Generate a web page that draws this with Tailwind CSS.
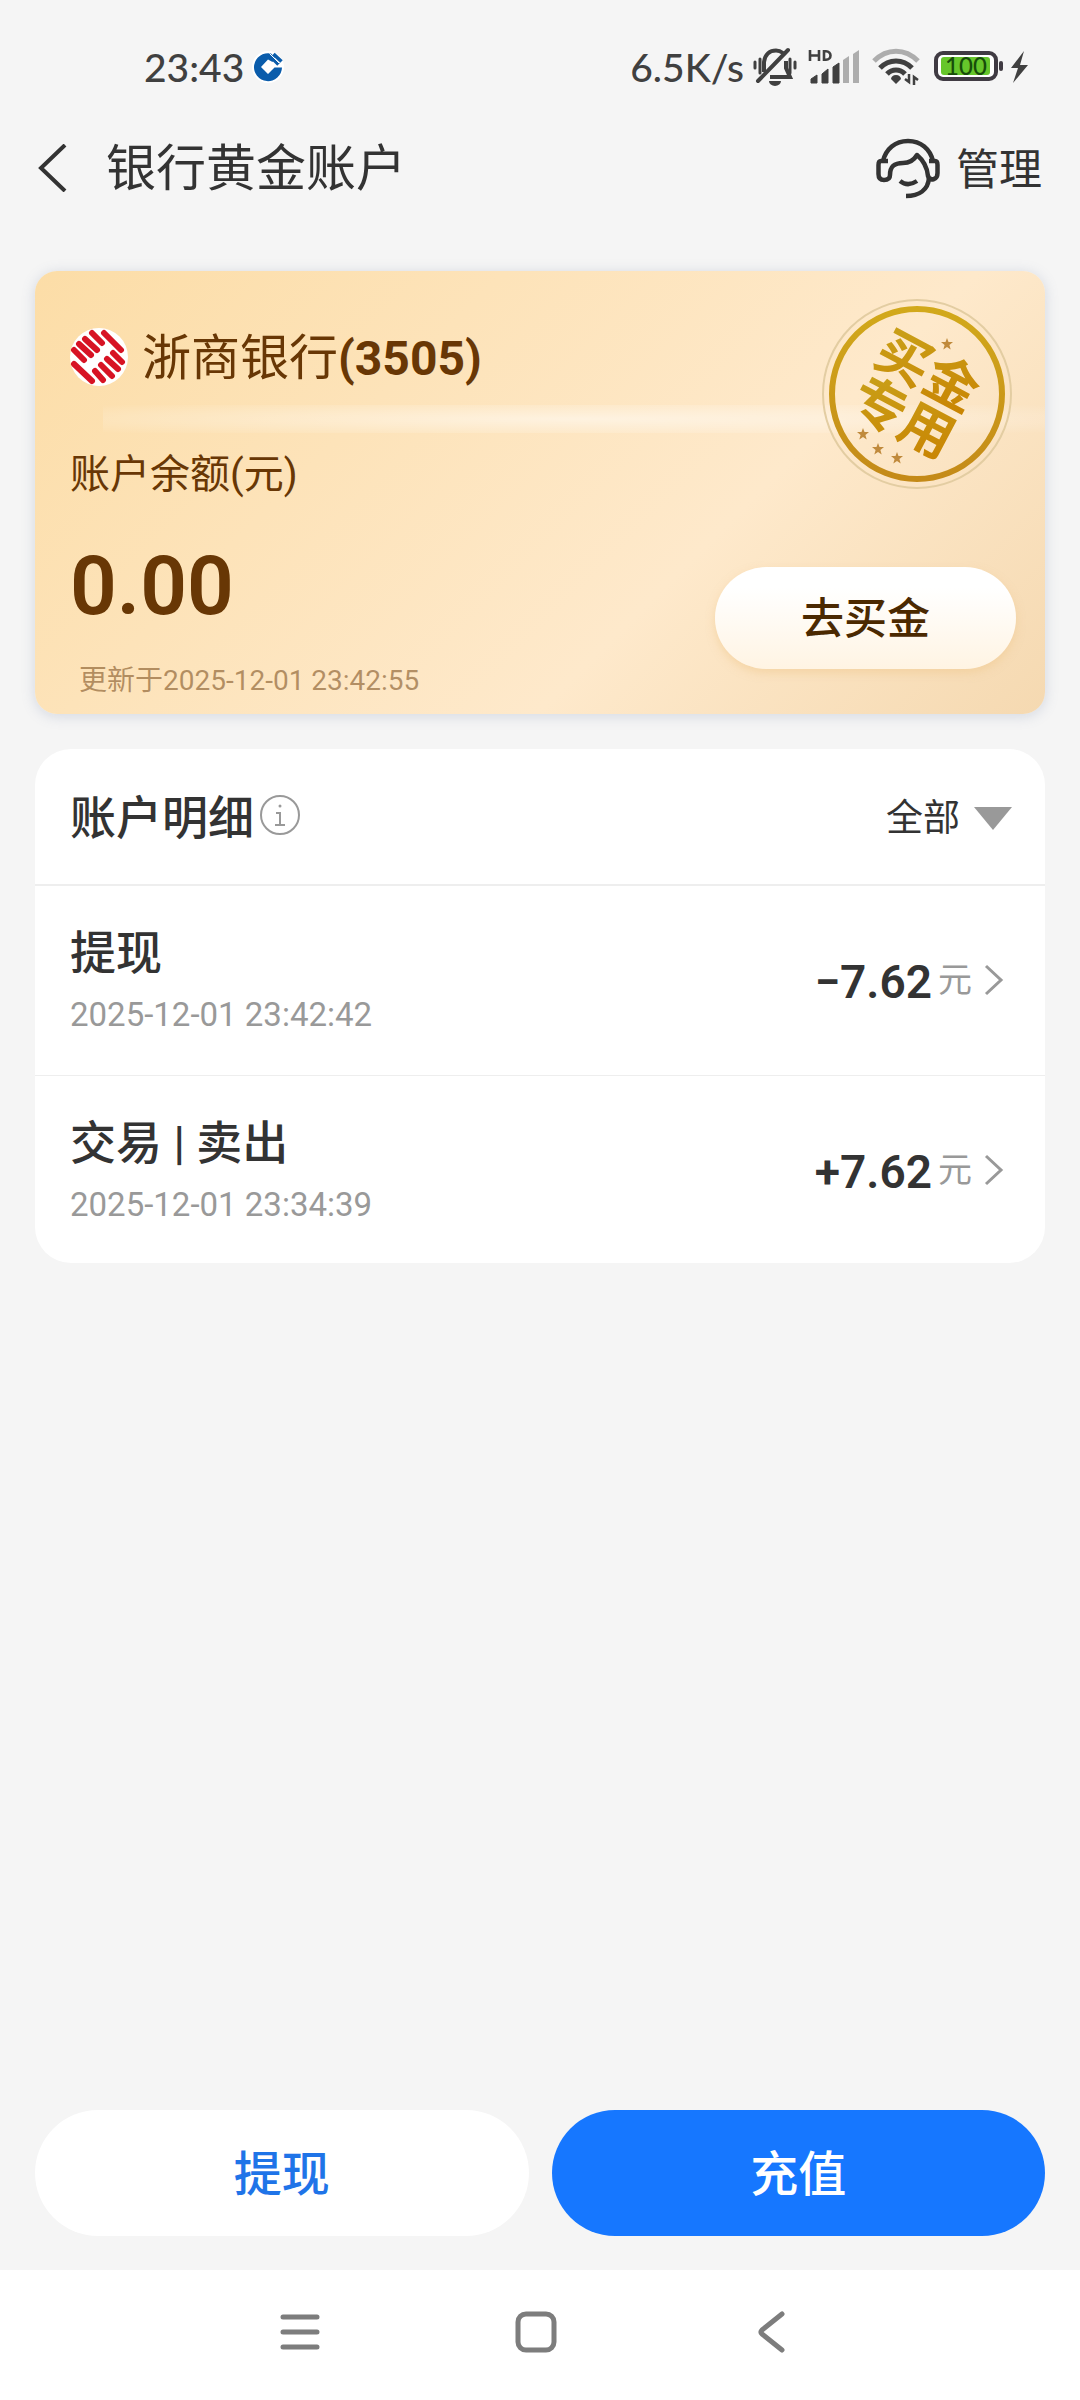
<!DOCTYPE html>
<html lang="zh-CN">
<head>
<meta charset="utf-8">
<meta name="viewport" content="width=device-width, initial-scale=1">
<title>银行黄金账户</title>
<script src="https://cdn.jsdelivr.net/npm/@tailwindcss/browser@4"></script>
</head>
<body class="flex min-h-screen flex-col bg-[#f5f5f5] font-['Roboto','Noto_Sans_CJK_SC',sans-serif] text-[#333]">

<!-- Status bar -->
<div class="flex h-[134px] items-center justify-between pr-[50px] pl-[144px] font-['Lato',sans-serif] text-[39px] leading-[48px] font-medium text-[#404040]">
  <div class="flex items-center gap-2">
    <span>23:43</span>
    <svg class="size-8" viewBox="0 0 32 32" aria-hidden="true">
      <circle cx="16" cy="16" r="16" fill="#fff"/>
      <path d="M30 16.500A14 14 0 1 1 19 2.500L23 7L20.500 11L16 8.500L9 16L16 23L22.500 16.500Z" fill="#0a5cab"/>
      <path d="M17 4L26.500 13.500M21.500 3L29.500 10.500" stroke="#0a5cab" stroke-width="3.500"/>
      <path d="M17.500 2.500L27 12" stroke="#fff" stroke-width="1"/>
    </svg>
  </div>
  <div class="flex items-center">
    <span>6.5K/s</span>
    <svg class="ml-2 h-10 w-[46px]" viewBox="0 0 46 40" fill="none" stroke="#404040" stroke-width="4" aria-hidden="true">
      <path d="M3 15v6M8 12v14M38 12v14M43 15v6" stroke-width="3" stroke-linecap="round"/>
      <path d="M12 25V15C13 7 18 3.500 24 3.500C27 3.500 29 4.500 31 6M34 14V21L38 30H18"/>
      <path d="M6 34L36 3" stroke-linecap="round"/>
      <path d="M17 34h12a6 5 0 0 1-12 0Z" fill="#404040" stroke="none"/>
    </svg>
    <svg class="ml-[10px] h-10 w-[52px]" viewBox="0 0 52 40" fill="#404040" aria-hidden="true">
      <path d="M2 3v11M11 3v11M2 8.500h9M16 4.300v8.400h2c6 0 6-8.400 0-8.400Z" fill="none" stroke="#404040" stroke-width="2.600"/>
      <path d="M3 32l6-4v8H3ZM14 27l6-5v14h-6ZM25 20l6-4v20h-6Z" stroke="#404040" stroke-width="1" stroke-linejoin="round"/>
      <path d="M35 13l6-4v27h-6ZM45 7l6-4v33h-6Z" fill="#adadad"/>
    </svg>
    <svg class="ml-3 h-10 w-12" viewBox="0 0 48 40" fill="none" stroke="#404040" stroke-width="5" aria-hidden="true">
      <path d="M2 14C15 1 33 1 46 14" stroke="#adadad"/>
      <path d="M8 21C17 11.500 31 11.500 40 21M15 27C20 21.500 28 21.500 33 27"/>
      <path d="M24 28c3 0 5 2 5 4l-5 5l-5-5c0-2 2-4 5-4Z" fill="#404040" stroke="none"/>
      <path d="M37 27v8l-4-3M42 38v-8l4 3" stroke-width="2.500"/>
    </svg>
    <svg class="ml-[14px] h-10 w-24" viewBox="0 0 96 40" aria-hidden="true">
      <rect x="2" y="6" width="60" height="26" rx="7" fill="#fff" stroke="#403b43" stroke-width="4"/>
      <rect x="7" y="10" width="49" height="18" rx="3" fill="#66c62b"/>
      <text x="32" y="28" text-anchor="middle" font-family="Lato, sans-serif" font-size="24" font-weight="500" fill="#174d0a">100</text>
      <rect x="65" y="14" width="4" height="10" rx="2" fill="#403b43"/>
      <path d="M90 4L77 21h7l-5 15L94 18h-8Z" fill="#404040"/>
    </svg>
  </div>
</div>

<!-- Title bar -->
<header class="flex h-[68px] items-center pr-[38px] pl-9">
  <button class="h-[68px] w-9" aria-label="返回">
    <svg class="h-12 w-8" viewBox="0 0 32 48" fill="none" stroke="#333" stroke-width="4" aria-hidden="true"><path d="M29 1L5 24L29 47"/></svg>
  </button>
  <h1 class="ml-[34px] pt-[2px] text-[50px] leading-[60px]">银行黄金账户</h1>
  <a href="#manage" class="ml-auto flex items-center gap-4 text-[43px] leading-[60px]">
    <svg class="h-[62px] w-16" viewBox="0 0 64 62" fill="none" stroke="#333" stroke-width="4.500" stroke-linejoin="round" aria-hidden="true">
      <path d="M7 24C10 12 19 4 32 4S54 12 57 24"/>
      <path d="M12 24H5Q2.500 24 2.500 28V37Q2.500 43 8 43Q14 43 14 38C14 29 19 26 27 26C34 26 38 23 41 18C47 23 51 29 52 39C53 42 55 43 58 42Q61.500 41 61.500 36V28Q61.500 24 59 24H53"/>
      <path d="M24 44C29 48 35 48 41 44M53 41C52 53 43 59 30 59"/>
    </svg>
    <span class="pt-1">管理</span>
  </a>
</header>

<main class="flex-1 px-[35px] pt-[69px]">
  <!-- Gold account -->
  <section class="relative rounded-[22px] bg-linear-[135deg] from-[#fcdda7] via-[#fee9cb] via-65% to-[#f5d9b1] pt-[57px] pl-[35px] text-[#683705] shadow-[0_2px_14px_rgba(90,110,150,0.22)]">
    <div class="absolute top-[134px] right-0 left-[68px] h-[28px] bg-radial-[ellipse_at_center] from-white/50 to-transparent" aria-hidden="true"></div>
    <svg class="absolute top-[28px] right-[33px] size-[190px]" viewBox="0 0 190 190" role="img" aria-label="买金专用">
      <defs>
        <linearGradient id="gold" x1="0" y1="0" x2="0" y2="1"><stop offset="0" stop-color="#d2a91b"/><stop offset="1" stop-color="#c48a18"/></linearGradient>
        <linearGradient id="ink" x1="0" y1="0" x2="1" y2="1"><stop offset="0" stop-color="#c9a51c"/><stop offset="1" stop-color="#c98100"/></linearGradient>
        <path id="star" d="M0-6L1.500-2H6L2.400 1L3.700 5.500L0 3L-3.700 5.500L-2.400 1L-6-2H-1.500Z"/>
      </defs>
      <circle cx="95" cy="95" r="94" fill="none" stroke="#e3cda2" stroke-width="2"/>
      <circle cx="95" cy="95" r="85" fill="none" stroke="url(#gold)" stroke-width="6"/>
      <g transform="rotate(28 95 97)" fill="url(#ink)" font-family="Noto Sans CJK SC, sans-serif" font-size="54" font-weight="700" text-anchor="middle">
        <text x="93" y="89">买金</text>
        <text x="93" y="142">专用</text>
      </g>
      <g fill="#c08a3c">
        <use href="#star" x="125" y="45"/><use href="#star" x="41" y="135"/><use href="#star" x="56" y="150"/><use href="#star" x="75" y="159"/>
      </g>
    </svg>
    <div class="flex h-[58px] items-center gap-[14px]">
      <svg class="size-[58px]" viewBox="0 0 58 58" aria-hidden="true">
        <circle cx="29" cy="29" r="29" fill="#fff"/>
        <path d="M34 5L51 22M22 5L32 15M15 11L27 22M9 16L21 27M4 22L14 32M4 36L22 53M25 43L33 52M31 37L42 48M37 31L48 41M43 25L52 34" fill="none" stroke="#d71324" stroke-width="6" stroke-linecap="round"/>
      </svg>
      <h2 class="pt-1 text-[49px] leading-[58px]">浙商银行<span class="text-[48px] font-bold">(3505)</span></h2>
    </div>
    <div class="flex items-end justify-between">
      <div>
        <p class="mt-[65px] text-[40px] leading-[48px]">账户余额(元)</p>
        <p class="mt-[39px] text-[82px] leading-[96px] font-semibold">0.00</p>
        <p class="mt-[27px] pb-[13px] pl-[9px] text-[28px] leading-[40px] text-[#683705]/50">更新于2025-12-01 23:42:55</p>
      </div>
      <button class="mr-[29px] mb-[45px] h-[102px] w-[301px] rounded-full bg-linear-to-b from-white from-20% to-[#fff4e3] pt-[2px] text-[43px] font-medium text-[#4b2901] shadow-[0_4px_8px_rgba(240,200,140,0.5)]">去买金</button>
    </div>
  </section>

  <!-- Account entries -->
  <section class="mt-[35px] rounded-[36px] bg-white">
    <div class="flex h-[137px] items-center border-b-2 border-[#eee] pr-[33px] pl-[35px]">
      <h2 class="pt-[2px] text-[46px] leading-[56px] font-medium">账户明细</h2>
      <button class="mb-1 ml-[6px]" aria-label="明细说明">
        <svg class="size-10" viewBox="0 0 40 40" fill="none" stroke="#999" stroke-width="2" aria-hidden="true">
          <circle cx="20" cy="20" r="19"/><path d="M16 18h4v12M15 30h10"/><circle cx="20" cy="11" r="1.500" fill="#999" stroke="none"/>
        </svg>
      </button>
      <label class="ml-auto flex items-center gap-[14px] pt-1">
        <select class="appearance-none bg-transparent text-[37px] leading-[48px]" aria-label="明细类型"><option>全部</option></select>
        <svg class="h-[23px] w-[38px]" viewBox="0 0 38 23" aria-hidden="true"><path d="M0 0H38L19 23Z" fill="#999"/></svg>
      </label>
    </div>
    <ul>
      <li class="border-b border-[#eee]">
        <a href="#withdraw-entry" class="flex items-center justify-between pt-[39px] pr-[41px] pb-[40px] pl-[35px]">
          <div>
            <h3 class="text-[46px] leading-[56px] font-medium">提现</h3>
            <p class="mt-[14px] text-[33px] leading-[40px] text-[#999]">2025-12-01 23:42:42</p>
          </div>
          <div class="flex items-center">
            <span class="pt-1 text-[46px] leading-[56px] font-semibold">−7.62</span>
            <span class="ml-[6px] text-[34px] leading-[40px] text-[#999]">元</span>
            <svg class="ml-3 h-8 w-5" viewBox="0 0 20 32" fill="none" stroke="#999" stroke-width="3" aria-hidden="true"><path d="M2 2L17 16L2 30"/></svg>
          </div>
        </a>
      </li>
      <li>
        <a href="#sell-entry" class="flex items-center justify-between pt-[39px] pr-[41px] pb-[38px] pl-[35px]">
          <div>
            <h3 class="text-[46px] leading-[56px] font-medium">交易 | 卖出</h3>
            <p class="mt-[14px] text-[33px] leading-[40px] text-[#999]">2025-12-01 23:34:39</p>
          </div>
          <div class="flex items-center">
            <span class="pt-1 text-[46px] leading-[56px] font-semibold">+7.62</span>
            <span class="ml-[6px] text-[34px] leading-[40px] text-[#999]">元</span>
            <svg class="ml-3 h-8 w-5" viewBox="0 0 20 32" fill="none" stroke="#999" stroke-width="3" aria-hidden="true"><path d="M2 2L17 16L2 30"/></svg>
          </div>
        </a>
      </li>
    </ul>
  </section>
</main>

<!-- Actions -->
<footer class="grid grid-cols-2 gap-[23px] px-[35px] pb-[34px] text-[48px] font-medium">
  <button class="h-[126px] rounded-full bg-white pt-1 text-[#1f74e8]">提现</button>
  <button class="h-[126px] rounded-full bg-[#1677ff] pt-1 text-white">充值</button>
</footer>

<!-- System navigation -->
<nav class="flex h-[130px] items-center justify-center bg-white pr-2 pb-[6px]">
  <button class="flex w-[236px] justify-center" aria-label="最近任务"><svg class="size-11" viewBox="0 0 44 44" stroke="#7d7d7d" stroke-width="5" stroke-linecap="round" aria-hidden="true"><path d="M5 7H39M5 22H39M5 37H39"/></svg></button>
  <button class="flex w-[236px] justify-center" aria-label="主屏幕"><svg class="size-11" viewBox="0 0 44 44" fill="none" stroke="#7d7d7d" stroke-width="5" aria-hidden="true"><rect x="4" y="4" width="36" height="36" rx="8"/></svg></button>
  <button class="flex w-[236px] justify-center" aria-label="返回上一页"><svg class="size-11" viewBox="0 0 44 44" fill="none" stroke="#7d7d7d" stroke-width="5" stroke-linecap="round" stroke-linejoin="round" aria-hidden="true"><path d="M32 4L12 20Q10 22 12 24L32 40"/></svg></button>
</nav>
</body>
</html>
